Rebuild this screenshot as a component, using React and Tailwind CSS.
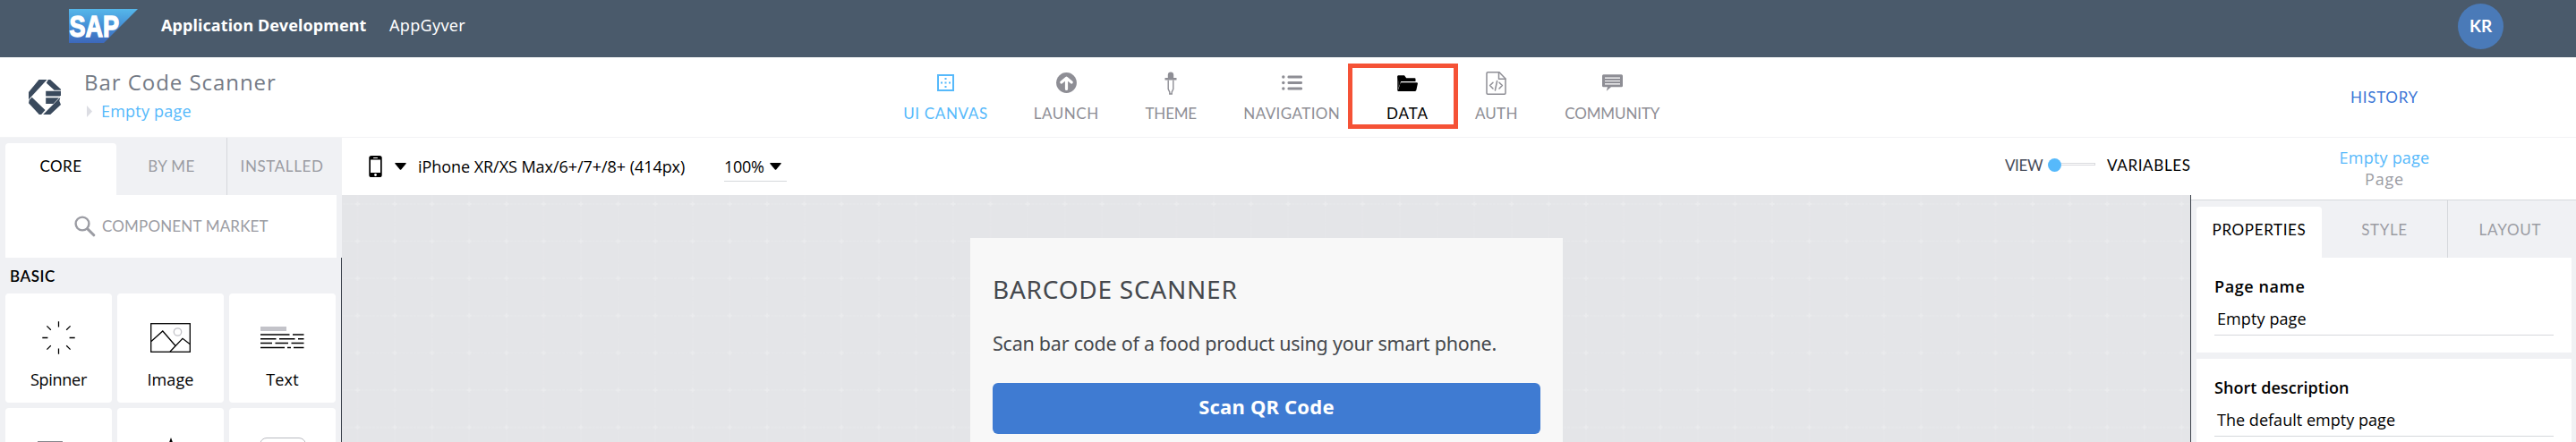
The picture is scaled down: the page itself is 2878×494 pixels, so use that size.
import React from "react";

const SapLogo = () => (
  <svg className="h-[38px] w-[77px] shrink-0" viewBox="0 0 77 38">
    <defs>
      <linearGradient id="sap" x1="0" y1="0" x2="0" y2="1">
        <stop offset="0" stopColor="#55b7ea" />
        <stop offset="0.5" stopColor="#4590d6" />
        <stop offset="1" stopColor="#3d68bb" />
      </linearGradient>
    </defs>
    <path d="M0 0H77L39 38H0Z" fill="url(#sap)" />
    <text x="0.5" y="31" textLength="55.5" lengthAdjust="spacingAndGlyphs" fill="#fff" stroke="#fff" strokeWidth="1.4" fontFamily="Liberation Sans, sans-serif" fontWeight="700" fontSize="33">SAP</text>
  </svg>
);

const AppLogo = () => (
  <svg className="h-[39px] w-[36px] shrink-0" viewBox="36 42 107 116" fill="#3a4a5d">
    <path d="M36 84 70 42H97L36 108Z" />
    <path d="M101 42H108L143 74V77H121L95 53Z" />
    <path d="M93 80H143V93L140 97H93Z" />
    <path d="M93 102H137L118 122H93Z" />
    <path d="M38 110 47 101 91 143 78 158H71L36 120Z" />
    <path d="M141 101 138 113 143 125 108 158H84Z" />
  </svg>
);

const CanvasIcon = () => (
  <svg width="19" height="19" viewBox="0 0 19 19" fill="none" stroke="#56b9fb">
    <rect x="1" y="1" width="17" height="17" strokeWidth="2" />
    <g fill="#56b9fb" stroke="none">
      <rect x="8.5" y="4" width="2" height="2" />
      <rect x="8.5" y="8.5" width="2" height="2" />
      <rect x="8.5" y="13" width="2" height="2" />
      <rect x="4" y="8.5" width="2" height="2" />
      <rect x="13" y="8.5" width="2" height="2" />
    </g>
  </svg>
);

const LaunchIcon = () => (
  <svg width="23" height="23" viewBox="0 0 23 23">
    <circle cx="11.5" cy="11.5" r="11.4" fill="#8e8e95" />
    <path d="M11.5 18.5V6.5M5.8 11 11.5 6.2 17.2 11" fill="none" stroke="#fff" strokeWidth="3.2" strokeLinecap="round" strokeLinejoin="round" />
  </svg>
);

const ThemeIcon = () => (
  <svg width="14" height="26" viewBox="0 0 14 26">
    <path d="M3.8 7V3.5Q4 0.5 7 0.5T10.2 3.5V7H13.5V9.6H0.5V7Z" fill="#8e8e95" />
    <path d="M4.2 9.5V19.5L5.8 23V25H8.2V23L9.8 19.5V9.5" fill="none" stroke="#8e8e95" strokeWidth="1.4" />
  </svg>
);

const NavIcon = () => (
  <svg width="23" height="17" viewBox="0 0 23 17" fill="#8e8e95">
    <circle cx="1.8" cy="2" r="1.7" />
    <circle cx="1.8" cy="8.5" r="1.7" />
    <circle cx="1.8" cy="15" r="1.7" />
    <rect x="6.5" y="0.4" width="16.5" height="3.2" rx="1.4" />
    <rect x="6.5" y="6.9" width="16.5" height="3.2" rx="1.4" />
    <rect x="6.5" y="13.4" width="16.5" height="3.2" rx="1.4" />
  </svg>
);

const FolderIcon = () => (
  <svg width="23" height="18" viewBox="0 0 23 18" fill="#000">
    <path d="M0.3 1.2Q0.3 0.3 1.3 0.3H8L10.2 3.2H19.5Q20.5 3.2 20.5 4.2V7H4.2L1.2 15V7Z" />
    <path d="M4.8 8.3H21.5Q23.2 8.3 22.9 9.4L21.4 16.6Q21.1 18 20 18H1.4Q0.6 18 0.9 17L3.4 9.2Q3.7 8.3 4.8 8.3Z" />
    <path d="M0.3 1.2H1.2V17.5H0.3Z" />
  </svg>
);

const AuthIcon = () => (
  <svg width="23" height="26" viewBox="0 0 23 26" fill="none" stroke="#8e8e95" strokeWidth="1.5" strokeLinecap="round" strokeLinejoin="round">
    <path d="M2 0.8H15L22 8V24Q22 25.2 20.8 25.2H2.2Q1 25.2 1 24V2Q1 0.8 2.2 0.8" />
    <path d="M14.5 1V8.2H22" />
    <path d="M8 12.2 4.6 15.5 8 19M15 12.2 18.4 15.5 15 19M12.6 10.5 10.4 21" />
  </svg>
);

const ChatIcon = () => (
  <svg width="23" height="19" viewBox="0 0 23 19">
    <path d="M1.5 0.3H21.5Q23 0.3 23 1.8V12.7Q23 14.2 21.5 14.2H10L4.8 18.8 6 14.2H1.5Q0 14.2 0 12.7V1.8Q0 0.3 1.5 0.3Z" fill="#8e8e95" />
    <path d="M3 4.2H20M3 7.5H20M3 10.8H20" stroke="#fff" strokeWidth="1.2" />
  </svg>
);

const Caret = () => (
  <svg className="shrink-0" width="13" height="8" viewBox="0 0 13 8">
    <path d="M0.5 0H12.5Q13 0.4 12.6 1L7.2 7.4Q6.5 8 5.8 7.4L0.4 1Q0 0.4 0.5 0Z" />
  </svg>
);

const PhoneIcon = () => (
  <svg className="shrink-0" width="15" height="24" viewBox="0 0 15 24">
    <rect x="0.3" y="0" width="14.4" height="24" rx="2.6" />
    <rect x="2" y="4.5" width="11" height="14.5" fill="#fff" />
    <rect x="5" y="2" width="5" height="1" rx="0.5" fill="#fff" />
    <circle cx="7.5" cy="21.5" r="1.4" fill="#fff" />
  </svg>
);

const SpinnerIcon = () => (
  <svg width="37" height="37" viewBox="0 0 37 37" stroke="#000" strokeWidth="1.3">
    <path d="M18.5 0.3V6.4M18.5 30.6V36.7M0.3 18.5H6.4M30.6 18.5H36.7M5.4 5.4 9.8 9.8M27.2 27.2 31.6 31.6M31.6 5.4 27.2 9.8M9.8 27.2 5.4 31.6" />
  </svg>
);

const ImageIcon = () => (
  <svg width="45" height="33" viewBox="0 0 45 33" fill="none" stroke="#000" strokeWidth="1.3">
    <circle cx="30.5" cy="10" r="4.2" stroke="#c2c2c8" />
    <rect x="0.7" y="0.7" width="43.6" height="31.6" />
    <path d="M1 20.5 13.8 9 27.8 25.2M22 32 36 17.3 44 23.5" />
  </svg>
);

const TextIcon = () => (
  <svg width="49" height="25" viewBox="0 0 49 25">
    <rect x="0" y="0" width="29" height="5" fill="#c3c3c9" />
    <path d="M0 9H32.5M36 9H48.5M0 13.8H17.5M21 13.8H38.5M42 13.8H48.5M0 18.6H13M16.5 18.6H31M34.5 18.6H48.5M0 23.4H27M30 23.4H34M37 23.4H48.5" stroke="#000" strokeWidth="1.5" />
  </svg>
);

const nav = [
  { label: "UI CANVAS", icon: <CanvasIcon />, cls: "w-[93px] text-[#56b9fb] tracking-[0.65px]" },
  { label: "LAUNCH", icon: <LaunchIcon />, cls: "w-[70.5px] text-[#8e8e95] tracking-[0.5px]" },
  { label: "THEME", icon: <ThemeIcon />, cls: "w-[57.5px] text-[#8e8e95] tracking-[-0.2px]" },
  { label: "NAVIGATION", icon: <NavIcon />, cls: "w-[106.5px] text-[#8e8e95] tracking-[0.4px]" },
  { label: "DATA", icon: <FolderIcon />, cls: "w-[46px] text-black tracking-[0.9px]", marked: true },
  { label: "AUTH", icon: <AuthIcon />, cls: "w-[46.5px] text-[#8e8e95] tracking-[0.25px]" },
  { label: "COMMUNITY", icon: <ChatIcon />, cls: "w-[106.5px] text-[#8e8e95] tracking-[-0.12px]" },
];

const tiles = [
  { label: "Spinner", icon: <SpinnerIcon />, cls: "tracking-[-0.27px]" },
  { label: "Image", icon: <ImageIcon />, cls: "tracking-[0.13px]" },
  { label: "Text", icon: <TextIcon />, cls: "tracking-[0.19px]" },
];

const Field = ({ title, titleCls, value, valueCls }) => (
  <div className="flex h-[106px] flex-col bg-white pl-5 pr-5 font-['Open_Sans',sans-serif]">
    <span className={`mt-5 text-[18px] font-semibold leading-6 ${titleCls}`}>{title}</span>
    <div className="mt-[12px] flex h-[31px] border-b border-[#d6d8dc] pl-[3px]">
      <span className={`text-[18px] leading-6 ${valueCls}`}>{value}</span>
    </div>
  </div>
);

export default function App() {
  return (
    <div className="flex h-[494px] w-[2878px] flex-col overflow-hidden whitespace-nowrap bg-white font-['Lato',sans-serif] text-[17px] text-black">
      <header className="flex h-16 shrink-0 items-start bg-[#4a5a6b] pl-[77px] font-['Noto_Sans',sans-serif] text-[18px] leading-6 text-white">
        <div className="mt-[10px]"><SapLogo /></div>
        <span className="ml-[26px] mt-4 w-[231px] font-bold tracking-[0.1px]">Application Development</span>
        <span className="ml-6 mt-4 tracking-[0.3px]">AppGyver</span>
        <div className="ml-auto mr-[81px] mt-1 flex h-[51px] w-[51px] items-center justify-center rounded-full bg-[#4a7ab8] pb-0.5 font-['Lato',sans-serif] text-[19px] font-bold">KR</div>
      </header>

      <div className="flex h-[90px] shrink-0 border-b border-[#f3f3f5]">
        <div className="flex w-[1010px] shrink-0 pl-8 font-['Open_Sans',sans-serif]">
          <div className="mt-[25px]"><AppLogo /></div>
          <div className="ml-[26px] mt-[14px] flex flex-col">
            <span className="text-[24px] leading-7 tracking-[0.95px] text-[#747a85]">Bar Code Scanner</span>
            <div className="mt-2 flex items-center pl-[3px]">
              <svg width="6" height="13" viewBox="0 0 6 13"><path d="M0 0 6 6.5 0 13Z" fill="#dcdde3" /></svg>
              <span className="ml-[10px] text-[18px] leading-5 tracking-[0.21px] text-[#56b9fb]">Empty page</span>
            </div>
          </div>
        </div>
        <nav className="flex gap-[53px] pt-[15px]">
          {nav.map((n) => (
            <div key={n.label} className={`relative flex flex-col items-center ${n.cls}`}>
              <div className="flex h-[27px] items-center">{n.icon}</div>
              <span className="mt-[11px] leading-5">{n.label}</span>
              {n.marked && <div className="absolute -left-11 -top-2 h-[73px] w-[123px] border-[5px] border-[#f55236]" />}
            </div>
          ))}
        </nav>
        <div className="ml-auto flex w-[430px] justify-center pt-[35px]">
          <span className="ml-[2px] leading-5 tracking-[0.7px] text-[#3b76d6]">HISTORY</span>
        </div>
      </div>

      <div className="flex min-h-0 flex-1">
        <aside className="flex w-[382px] shrink-0 flex-col bg-[#f0f1f4]">
          <div className="flex h-16 shrink-0 pl-1.5 leading-5">
            <div className="mt-1.5 flex w-[124px] justify-center rounded-t bg-white pt-4 tracking-[0.5px]">CORE</div>
            <div className="flex w-[124px] justify-center border-r border-[#d6d8dc] pt-[22px] tracking-[0.45px] text-[#9b9ca3]">BY ME</div>
            <div className="flex w-[122px] justify-center pt-[22px] tracking-[0.6px] text-[#9b9ca3]">INSTALLED</div>
          </div>
          <div className="ml-1.5 flex h-[70px] w-[370px] shrink-0 items-center bg-white pl-[77px]">
            <svg width="24" height="24" viewBox="0 0 24 24" fill="none" stroke="#9b9ca3">
              <circle cx="9" cy="9" r="7.4" strokeWidth="2.4" />
              <path d="M14.6 14.6 21.8 21.8" strokeWidth="3" strokeLinecap="round" />
            </svg>
            <span className="ml-[7px] tracking-[0.17px] text-[#9b9ca3]">COMPONENT MARKET</span>
          </div>
          <div className="flex flex-1 flex-col border-r border-[#3c424c] pl-1.5">
            <span className="mt-[11px] pl-[5px] font-semibold leading-5 tracking-[0.55px]">BASIC</span>
            <div className="mt-[9px] grid w-[369px] grid-cols-3 gap-1.5">
              {tiles.map((t) => (
                <div key={t.label} className="flex h-[122px] flex-col items-center rounded bg-white">
                  <div className="mt-[30px] flex h-[38px] items-center">{t.icon}</div>
                  <span className={`mt-4 font-['Open_Sans',sans-serif] text-[18px] leading-6 ${t.cls}`}>{t.label}</span>
                </div>
              ))}
              <div className="flex h-[122px] rounded bg-white pl-9 pt-[36.5px]">
                <svg width="28" height="20"><rect width="28" height="20" fill="#85868c" /></svg>
              </div>
              <div className="flex h-[122px] justify-center rounded bg-white pt-[33px]">
                <svg width="38" height="38" viewBox="0 0 38 38"><path d="M19 0 24 14H38L27 23 31 37 19 29 7 37 11 23 0 14H14Z" /></svg>
              </div>
              <div className="flex h-[122px] justify-center rounded bg-white pt-[33px]">
                <div className="h-9 w-[52px] rounded-lg border border-[#b9bac1]" />
              </div>
            </div>
          </div>
        </aside>

        <main className="flex w-[2066px] shrink-0 flex-col">
          <div className="flex h-16 shrink-0 items-center pl-[30px]">
            <PhoneIcon />
            <div className="ml-[14px]"><Caret /></div>
            <span className="ml-[13px] w-[298px] font-['Open_Sans',sans-serif] text-[18px] leading-6 tracking-[-0.05px]">iPhone XR/XS Max/6+/7+/8+ (414px)</span>
            <div className="ml-[44px] flex h-[34px] w-[70px] items-center border-b border-[#d6d8dc]">
              <span className="w-[51px] font-['Open_Sans',sans-serif] text-[18px] leading-6 tracking-[-0.29px]">100%</span>
              <Caret />
            </div>
            <div className="ml-auto flex items-center pb-[3px] leading-5">
              <span className="w-[48px] tracking-[-0.4px] text-[#454b58]">VIEW</span>
              <span className="h-[15px] w-[15px] rounded-full bg-[#56b9fb]" />
              <span className="mt-[-3px] h-[3px] w-[38px] border border-l-0 border-[#d9dade]" />
              <span className="ml-[13px] w-[94px] tracking-[0.65px]">VARIABLES</span>
            </div>
          </div>
          <div className="relative flex flex-1 items-start border-r border-[#3c424c] bg-[#e4e5e8] pl-[702px] pt-12">
            <svg className="absolute inset-0 h-full w-full">
              <defs>
                <pattern id="grid" x="-3.3" y="-10.8" width="41.59" height="41.59" patternUnits="userSpaceOnUse">
                  <path d="M0 20.8H41.6" stroke="#e8e9eb" strokeWidth="1.2" strokeDasharray="3 1.16" />
                  <path d="M20.8 0V41.6" stroke="#e6e7ea" strokeWidth="1.2" strokeDasharray="3 1.16" />
                  <path d="M18.3 20.8H23.3M20.8 18.3V23.3" stroke="#ebecee" strokeWidth="1.4" />
                </pattern>
              </defs>
              <rect width="100%" height="100%" fill="url(#grid)" />
            </svg>
            <section className="relative flex h-[240px] w-[662px] flex-col bg-[#f8f8f8] px-[25px] pt-[41px] font-['Noto_Sans',sans-serif] text-[#45484d]">
              <span className="text-[28px] leading-8 tracking-[0.75px]">BARCODE SCANNER</span>
              <span className="mt-[31px] text-[21.5px] leading-7 tracking-[-0.24px]">Scan bar code of a food product using your smart phone.</span>
              <button className="mt-[30px] h-[57px] shrink-0 rounded-md bg-[#3f7bd2] pb-1 text-[22px] font-bold tracking-[0.2px] text-white">Scan QR Code</button>
            </section>
          </div>
        </main>

        <aside className="flex w-[430px] shrink-0 flex-col bg-[#f0f1f4]">
          <div className="flex h-[70px] shrink-0 flex-col items-center border-b border-[#d6d8dc] bg-white pt-[10px] font-['Open_Sans',sans-serif] text-[18px] leading-6">
            <span className="ml-[2px] tracking-[0.21px] text-[#56b9fb]">Empty page</span>
            <span className="ml-[2px] tracking-[0.8px] text-[#9b9ca3]">Page</span>
          </div>
          <div className="flex h-16 shrink-0 pl-1.5 leading-5">
            <div className="mt-[7px] flex w-[140px] justify-center rounded-t bg-white pt-[15.5px] tracking-[0.64px]">PROPERTIES</div>
            <div className="flex w-[141px] justify-center border-r border-[#d6d8dc] pt-[22.5px] tracking-[0.6px] text-[#9b9ca3]">STYLE</div>
            <div className="flex w-[139px] justify-center pt-[22.5px] tracking-[0.78px] text-[#9b9ca3]">LAYOUT</div>
          </div>
          <div className="ml-1.5 flex w-[419px] flex-col gap-[7px]">
            <Field title="Page name" titleCls="tracking-[0.6px]" value="Empty page" valueCls="tracking-[0.1px]" />
            <Field title="Short description" titleCls="tracking-[0.05px]" value="The default empty page" valueCls="tracking-[0.03px]" />
          </div>
        </aside>
      </div>
    </div>
  );
}
